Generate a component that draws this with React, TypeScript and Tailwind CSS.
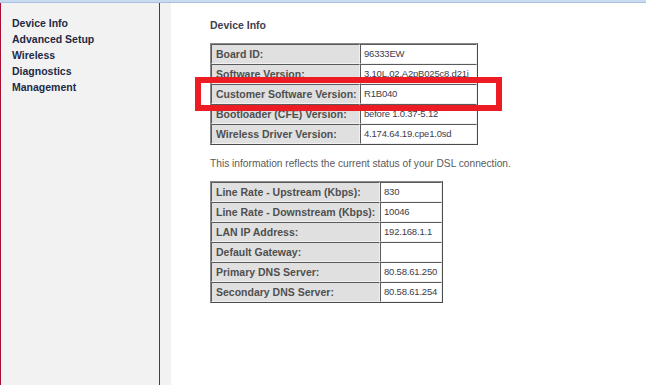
import React from "react";

const font = { fontFamily: '"Liberation Sans", Arial, sans-serif' };

type Row = { label: string; value: string };

const deviceRows: Row[] = [
  { label: "Board ID:", value: "96333EW" },
  { label: "Software Version:", value: "3.10L.02.A2pB025c8.d21i" },
  { label: "Customer Software Version:", value: "R1B040" },
  { label: "Bootloader (CFE) Version:", value: "before 1.0.37-5.12" },
  { label: "Wireless Driver Version:", value: "4.174.64.19.cpe1.0sd" },
];

const dslRows: Row[] = [
  { label: "Line Rate - Upstream (Kbps):", value: "830" },
  { label: "Line Rate - Downstream (Kbps):", value: "10046" },
  { label: "LAN IP Address:", value: "192.168.1.1" },
  { label: "Default Gateway:", value: "" },
  { label: "Primary DNS Server:", value: "80.58.61.250" },
  { label: "Secondary DNS Server:", value: "80.58.61.254" },
];

function InfoTable({
  rows,
  labelW,
  valueW,
}: {
  rows: Row[];
  labelW: number;
  valueW: number;
}) {
  return (
    <div className="flex w-fit flex-col border border-t-[#8a8a8a] border-l-[#8a8a8a] border-b-[#4a4a4a] border-r-[#4a4a4a]">
      {rows.map((r) => (
        <div key={r.label} className="flex h-[20px]">
          <div
            className="flex h-[20px] items-center overflow-hidden whitespace-nowrap border border-t-[#5a5a5a] border-l-[#5a5a5a] border-b-[#f0f0f0] border-r-[#f0f0f0] bg-[#e0e0e0] pl-[4px] pt-[1px] text-[10.5px] font-bold text-[#4f4f4f]"
            style={{ width: labelW }}
          >
            {r.label}
          </div>
          <div
            className="flex h-[20px] items-center overflow-hidden whitespace-nowrap border border-t-[#5a5a5a] border-l-[#5a5a5a] border-b-[#f0f0f0] border-r-[#f0f0f0] bg-white pl-[3px] pt-[1px] text-[9.5px] tracking-[-0.2px] text-[#3c3c4c]"
            style={{ width: valueW }}
          >
            {r.value}
          </div>
        </div>
      ))}
    </div>
  );
}

export default function App() {
  return (
    <div className="relative flex h-screen w-full flex-col overflow-hidden bg-white" style={font}>
      <div className="h-[3px] w-full shrink-0 border-b border-[#a9c1de] bg-[#c9dbf1]" />
      <div className="flex min-h-0 flex-1">
        <nav className="flex w-[160px] shrink-0 flex-col border-x border-[#a80f35] bg-[#f2f2f2] pl-[11px] pt-[12px] text-[10.5px] font-bold leading-[16px] text-[#1f2a45]">
          <span>Device Info</span>
          <span>Advanced Setup</span>
          <span>Wireless</span>
          <span>Diagnostics</span>
          <span>Management</span>
        </nav>
        <div className="w-[11px] shrink-0 bg-[#f2f2f2]" />
        <main className="flex flex-1 flex-col pl-[39px] pt-[14px]">
          <h1 className="text-[10.5px] font-bold leading-[16px] text-[#404050]">Device Info</h1>
          <div className="mt-[10px]">
            <InfoTable rows={deviceRows} labelW={149} valueW={117} />
          </div>
          <p className="mt-[11px] text-[10.2px] leading-[16px] text-[#5a5a5a]">
            This information reflects the current status of your DSL connection.
          </p>
          <div className="mt-[9px]">
            <InfoTable rows={dslRows} labelW={169} valueW={62} />
          </div>
        </main>
      </div>
      <div className="pointer-events-none absolute left-[195px] top-[77px] h-[34px] w-[307px] border-[6px] border-[#ed1c24]" />
    </div>
  );
}
